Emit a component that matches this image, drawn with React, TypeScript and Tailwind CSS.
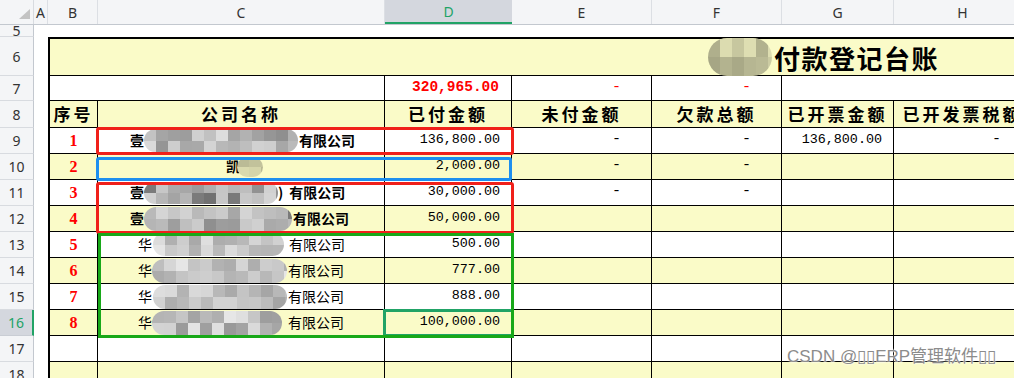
import React from 'react';

const YELLOW = 'bg-[#fafbc8]';
const CJK = "font-['Noto_Sans_CJK_SC',sans-serif]";
const MONO = "font-['Liberation_Mono',monospace]";

// pseudo-random pixel blocks for the blurred names
const rand = (seed: number) => {
  let s = seed;
  return () => {
    s = (s * 9301 + 49297) % 233280;
    return s / 233280;
  };
};

const Blur: React.FC<{ className: string; seed: number; lo?: number; hi?: number; olive?: boolean }> = ({
  className,
  seed,
  lo = 150,
  hi = 225,
  olive,
}) => {
  const r = rand(seed);
  const cells = Array.from({ length: 30 }, () => {
    const v = Math.round(lo + r() * (hi - lo));
    return olive ? `rgb(${v},${v},${Math.round(v * 0.8)})` : `rgb(${v},${v},${v})`;
  });
  return (
    <div className={`shrink-0 rounded-full overflow-hidden grid grid-rows-2 grid-flow-col auto-cols-[12px] ${className}`}>
      {cells.map((c, i) => (
        <div key={i} style={{ backgroundColor: c }} />
      ))}
    </div>
  );
};

const RowHead: React.FC<{ n: number; active?: boolean }> = ({ n, active }) => (
  <div
    className={`w-[34px] shrink-0 h-full flex items-center justify-center overflow-hidden border-b text-[14px] font-['Noto_Sans',sans-serif] ${
      active
        ? 'bg-[#d4d7de] text-[#21a366] border-r-2 border-r-[#21a366] border-b-[#c9cdd4]'
        : 'bg-[#f4f5f7] text-[#333] border-r border-r-[#c3c8cf] border-b-[#d8dbe0]'
    }`}
  >
    {n}
  </div>
);

const Cell: React.FC<{ w: string; yellow?: boolean; className?: string; children?: React.ReactNode }> = ({
  w,
  yellow,
  className = '',
  children,
}) => (
  <div
    className={`${w} shrink-0 h-full border-r border-b border-black flex items-center overflow-hidden whitespace-nowrap ${
      yellow ? YELLOW : 'bg-white'
    } ${className}`}
  >
    {children}
  </div>
);

const Gap = () => <div className="w-[14px] shrink-0 h-full bg-white" />;

const Num = ({ v }: { v: string }) => <span className={`${MONO} text-[13.4px] text-black`}>{v}</span>;

const Dash = ({ red }: { red?: boolean }) => (
  <span className={`${MONO} text-[15px] ${red ? 'text-[#ff0000]' : 'text-black'}`}>-</span>
);

type DataRow = {
  n: number;
  no?: number;
  name?: React.ReactNode;
  paid?: string;
  e?: boolean;
  f?: boolean;
  g?: string;
  h?: boolean;
};

const bold = `${CJK} text-[14px] font-bold text-black flex items-center`;
const plain = `${CJK} text-[14px] text-black flex items-center`;

const data: DataRow[] = [
  {
    n: 9,
    no: 1,
    name: (
      <div className={`${bold} pl-[32px]`}>
        <span>壹</span>
        <Blur className="w-[154px] h-[23px]" seed={11} lo={140} hi={225} />
        <span className="ml-[1px]">有限公司</span>
      </div>
    ),
    paid: '136,800.00',
    e: true,
    f: true,
    g: '136,800.00',
    h: true,
  },
  {
    n: 10,
    no: 2,
    name: (
      <div className={`${bold} pl-[128px]`}>
        <span>凯</span>
        <Blur className="w-[26px] h-[20px] -ml-[3px]" seed={5} lo={160} hi={225} olive />
      </div>
    ),
    paid: '2,000.00',
    e: true,
    f: true,
  },
  {
    n: 11,
    no: 3,
    name: (
      <div className={`${bold} pl-[32px]`}>
        <span>壹</span>
        <Blur className="w-[134px] h-[22px]" seed={23} lo={110} hi={215} />
        <span>)</span>
        <span className="ml-[6px]">有限公司</span>
      </div>
    ),
    paid: '30,000.00',
    e: true,
    f: true,
  },
  {
    n: 12,
    no: 4,
    name: (
      <div className={`${bold} pl-[32px]`}>
        <span>壹</span>
        <Blur className="w-[148px] h-[24px]" seed={37} lo={120} hi={215} />
        <span className="ml-[1px]">有限公司</span>
      </div>
    ),
    paid: '50,000.00',
  },
  {
    n: 13,
    no: 5,
    name: (
      <div className={`${plain} pl-[40px]`}>
        <span>华</span>
        <Blur className="w-[131px] h-[23px] ml-[1px]" seed={41} lo={165} hi={230} />
        <span className="ml-[5px]">有限公司</span>
      </div>
    ),
    paid: '500.00',
  },
  {
    n: 14,
    no: 6,
    name: (
      <div className={`${plain} pl-[40px]`}>
        <span>华</span>
        <Blur className="w-[135px] h-[24px]" seed={53} lo={170} hi={232} />
        <span className="ml-[1px]">有限公司</span>
      </div>
    ),
    paid: '777.00',
  },
  {
    n: 15,
    no: 7,
    name: (
      <div className={`${plain} pl-[40px]`}>
        <span>华</span>
        <Blur className="w-[134px] h-[24px] ml-[1px]" seed={67} lo={165} hi={228} />
        <span className="ml-[1px]">有限公司</span>
      </div>
    ),
    paid: '888.00',
  },
  {
    n: 16,
    no: 8,
    name: (
      <div className={`${plain} pl-[40px]`}>
        <span>华</span>
        <Blur className="w-[130px] h-[24px]" seed={79} lo={150} hi={232} />
        <span className="ml-[6px]">有限公司</span>
      </div>
    ),
    paid: '100,000.00',
  },
  { n: 17 },
  { n: 18 },
];

const COLS = [
  { l: 'A', w: 'w-[14px]' },
  { l: 'B', w: 'w-[50px]' },
  { l: 'C', w: 'w-[287px]' },
  { l: 'D', w: 'w-[127px]', active: true },
  { l: 'E', w: 'w-[140px]' },
  { l: 'F', w: 'w-[130px]' },
  { l: 'G', w: 'w-[112px]' },
  { l: 'H', w: 'w-[138px]' },
  { l: 'I', w: 'w-[100px]' },
];

const App: React.FC = () => {
  const head = `${CJK} text-[17px] font-bold tracking-[3px] justify-center text-black`;

  return (
    <div className="relative w-[1014px] h-[378px] overflow-hidden bg-white">
      {/* column letters */}
      <div className="flex h-[25px] bg-[#f4f5f7] border-b border-[#c3c8cf]">
        <div className="w-[34px] shrink-0 h-full border-r border-[#d8dbe0] relative">
          <svg className="absolute left-0 top-0" width="34" height="25" viewBox="0 0 34 25">
            <polygon points="19,19 30,19 30,9" fill="#c3c3c3" />
          </svg>
        </div>
        {COLS.map((c) => (
          <div
            key={c.l}
            className={`${c.w} shrink-0 h-full flex items-center justify-center text-[14px] font-['Noto_Sans',sans-serif] ${
              c.active
                ? 'bg-[#d4d7de] text-[#21a366] border-b-2 border-[#21a366]'
                : 'text-[#333] border-r border-[#dcdfe4]'
            }`}
          >
            {c.l}
          </div>
        ))}
      </div>

      {/* row 5 */}
      <div className="flex h-[12px]">
        <div className="w-[34px] shrink-0 h-full flex justify-center items-start overflow-hidden bg-[#f4f5f7] border-r border-r-[#c3c8cf] border-b border-b-[#d8dbe0] text-[14px] leading-[12px] font-['Noto_Sans',sans-serif] text-[#333]">
          5
        </div>
        <div className="flex-1 bg-white" />
      </div>

      {/* row 6 title */}
      <div className="flex h-[39px]">
        <RowHead n={6} />
        <Gap />
        <div className={`flex-1 h-full ${YELLOW} border-l-2 border-t-2 border-b border-black flex items-center pl-[658px] whitespace-nowrap`}>
          <Blur className="w-[64px] h-[38px] rounded-[20px]" seed={3} lo={150} hi={225} olive />
          <span className={`${CJK} text-[26px] font-bold tracking-[1.5px] text-black ml-[2px]`}>付款登记台账</span>
        </div>
      </div>

      {/* row 7 totals */}
      <div className="flex h-[25px]">
        <RowHead n={7} />
        <Gap />
        <Cell w="w-[337px] border-l-2" />
        <Cell w="w-[127px]" className="justify-end pr-[12px]">
          <span className={`${MONO} text-[14.5px] font-bold text-[#ff0000]`}>320,965.00</span>
        </Cell>
        <Cell w="w-[140px]" className="justify-end pr-[30px]">
          <Dash red />
        </Cell>
        <Cell w="w-[130px]" className="justify-end pr-[30px]">
          <Dash red />
        </Cell>
        <Cell w="w-[300px]" />
      </div>

      {/* row 8 headers */}
      <div className="flex h-[27px]">
        <RowHead n={8} />
        <Gap />
        <Cell w="w-[50px] border-l-2" yellow className={head}>序号</Cell>
        <Cell w="w-[287px]" yellow className={head}>公司名称</Cell>
        <Cell w="w-[127px]" yellow className={head}>已付金额</Cell>
        <Cell w="w-[140px]" yellow className={head}>未付金额</Cell>
        <Cell w="w-[130px]" yellow className={head}>欠款总额</Cell>
        <Cell w="w-[112px]" yellow className={head}>已开票金额</Cell>
        <Cell w="w-[138px]" yellow className={head}>已开发票税额</Cell>
        <Cell w="w-[100px]" yellow />
      </div>

      {/* data rows */}
      {data.map((r, i) => {
        const y = i % 2 === 1;
        return (
          <div key={r.n} className="flex h-[26px]">
            <RowHead n={r.n} active={r.n === 16} />
            <Gap />
            <Cell
              w="w-[50px] border-l-2"
              yellow={y}
              className="justify-center font-['Liberation_Serif',serif] font-bold text-[16px] text-[#ff0000]"
            >
              {r.no}
            </Cell>
            <Cell w="w-[287px]" yellow={y}>
              {r.name}
            </Cell>
            <Cell w="w-[127px]" yellow={y} className="justify-end pr-[11px]">
              {r.paid && <Num v={r.paid} />}
            </Cell>
            <Cell w="w-[140px]" yellow={y} className="justify-end pr-[30px]">
              {r.e && <Dash />}
            </Cell>
            <Cell w="w-[130px]" yellow={y} className="justify-end pr-[30px]">
              {r.f && <Dash />}
            </Cell>
            <Cell w="w-[112px]" yellow={y} className="justify-end pr-[11px]">
              {r.g && <Num v={r.g} />}
            </Cell>
            <Cell w="w-[138px]" yellow={y} className="justify-end pr-[30px]">
              {r.h && <Dash />}
            </Cell>
            <Cell w="w-[100px]" yellow={y} />
          </div>
        );
      })}

      {/* annotation boxes drawn over the sheet */}
      <div className="absolute left-[96px] top-[127px] w-[418px] h-[28px] border-[3px] border-[#f0201a] rounded-[3px]" />
      <div className="absolute left-[96px] top-[157px] w-[416px] h-[24px] border-[3px] border-[#1e8fef] rounded-[3px]" />
      <div className="absolute left-[96px] top-[182px] w-[418px] h-[52px] border-[3px] border-[#f0201a] rounded-[3px]" />
      <div className="absolute left-[383px] top-[309px] w-[131px] h-[28px] border-[3px] border-[#21a366]" />
      <div className="absolute left-[98px] top-[233px] w-[416px] h-[105px] border-[3px] border-[#18a818]" />

      {/* watermark */}
      <div className="absolute left-[787px] top-[347px] text-[17px] leading-[20px] text-[#8c8c8c] whitespace-nowrap font-['Liberation_Sans','Noto_Sans_CJK_SC',sans-serif] [text-shadow:0_0_2px_#fff,0_0_2px_#fff]">
        CSDN @▯▯ERP管理软件▯▯
      </div>
    </div>
  );
};

export default App;
